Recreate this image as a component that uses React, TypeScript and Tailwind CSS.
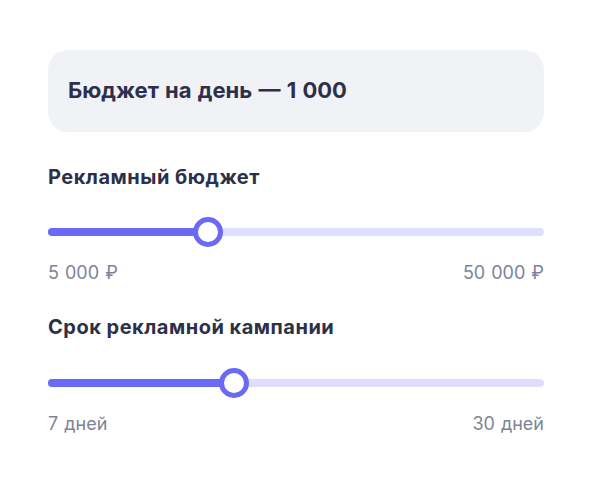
import React from "react";

type SliderProps = {
    pct: number;
    min: string;
    max: string;
};

function Slider({ pct, min, max }: SliderProps) {
    return (
        <div className="flex flex-col">
            <div className="relative h-[30px] flex items-center">
                <div className="h-[8px] w-full rounded-full bg-[#dedefc] overflow-hidden">
                    <div className="h-full bg-[#6b6af5]" style={{ width: `${pct}%` }} />
                </div>
                {/* thumb */}
                <div
                    className="absolute top-0 -translate-x-1/2 w-[30px] h-[30px] rounded-full border-[5px] border-[#6b6af5] bg-white"
                    style={{ left: `${pct}%` }}
                />
            </div>
            <div className="mt-[15px] flex justify-between text-[18px] leading-[22px] text-[#7c8497] [word-spacing:1px]">
                <span>{min}</span>
                <span>{max}</span>
            </div>
        </div>
    );
}

export default function App() {
    return (
        <div
            className="w-[592px] h-[481px] bg-white px-[48px] pt-[50px]"
            style={{ fontFamily: "Inter, 'Noto Sans', sans-serif" }}
        >
            <div className="h-[82px] rounded-[20px] bg-[#f1f2f6] px-[20px] flex items-center">
                <span className="text-[22px] font-bold text-[#2d3049] [word-spacing:1px] -mt-[2px]">
                    Бюджет на день — 1 000
                </span>
            </div>

            <div className="mt-[32px] text-[20px] leading-[26px] font-bold tracking-[0.5px] text-[#2d3049]">
                Рекламный бюджет
            </div>
            <div className="mt-[27px]">
                <Slider pct={32.2} min="5 000 ₽" max="50 000 ₽" />
            </div>

            <div className="mt-[30px] text-[20px] leading-[26px] font-bold tracking-[0.5px] text-[#2d3049]">
                Срок рекламной кампании
            </div>
            <div className="mt-[28px]">
                <Slider pct={37.5} min="7 дней" max="30 дней" />
            </div>
        </div>
    );
}
